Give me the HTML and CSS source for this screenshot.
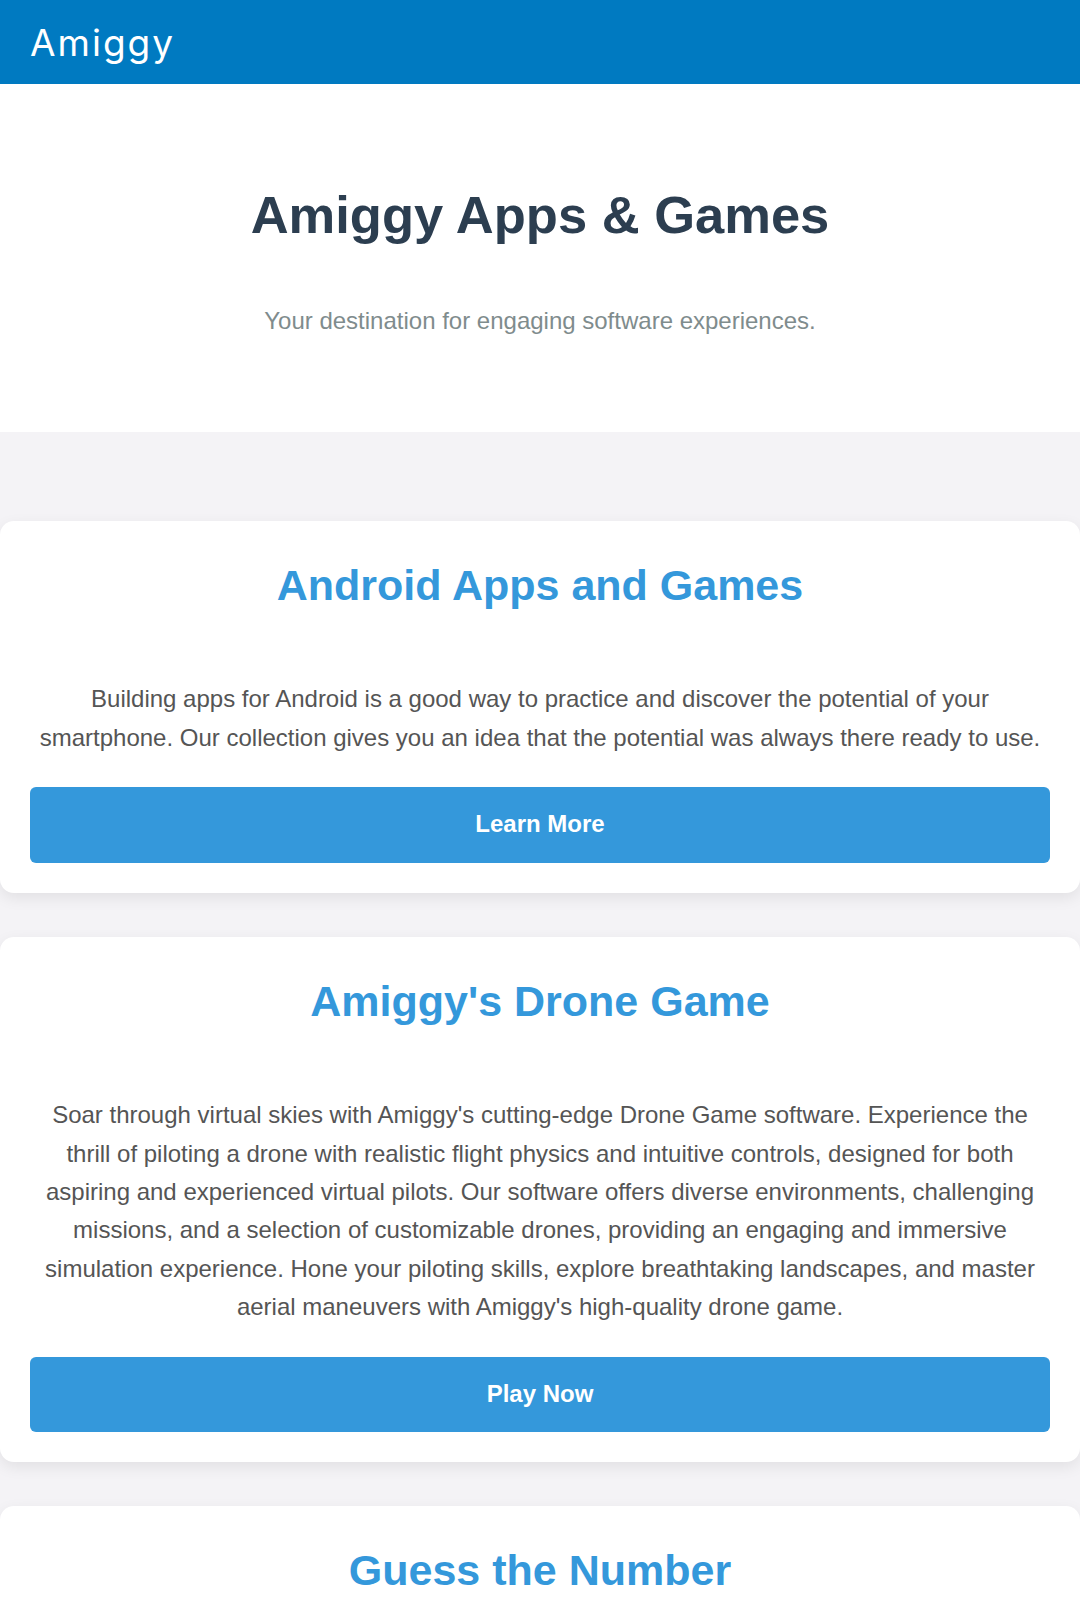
FILE: index.html
```html
<!DOCTYPE html>
<html lang="en">
<head>
    <meta charset="UTF-8">
    <title>Amiggy Apps &amp; Games</title>
    <link rel="stylesheet" href="styles.css">
</head>
<body>
<header class="topbar">
    <a class="logo" href="#">Amiggy</a>
</header>

<section class="hero">
    <h1>Amiggy Apps &amp; Games</h1>
    <p class="tagline">Your destination for engaging software experiences.</p>
</section>

<main class="cards">
    <div class="card">
        <h2>Android Apps and Games</h2>
        <p>Building apps for Android is a good way to practice and discover the potential of your smartphone. Our collection gives you an idea that the potential was always there ready to use.</p>
        <a class="btn" href="#">Learn More</a>
    </div>

    <div class="card">
        <h2>Amiggy's Drone Game</h2>
        <p>Soar through virtual skies with Amiggy's cutting-edge Drone Game software. Experience the thrill of piloting a drone with realistic flight physics and intuitive controls, designed for both aspiring and experienced virtual pilots. Our software offers diverse environments, challenging missions, and a selection of customizable drones, providing an engaging and immersive simulation experience. Hone your piloting skills, explore breathtaking landscapes, and master aerial maneuvers with Amiggy's high-quality drone game.</p>
        <a class="btn" href="#">Play Now</a>
    </div>

    <div class="card">
        <h2>Guess the Number</h2>
        <p>Put your intuition to the test with a classic number guessing game. Pick a range, follow the hints and find the secret number in as few tries as you can.</p>
        <a class="btn" href="#">Play Now</a>
    </div>
</main>
</body>
</html>
```

FILE: styles.css
```css
*{
    margin: 0;
    padding: 0;
    box-sizing: border-box;
}
body{
    font-family: "Liberation Sans", Arial, sans-serif;
    font-size: 24px;
    line-height: 1.6;
    color: #555;
    background-color: #f4f3f6;
}
/* 顶部导航 */
.topbar{
    height: 84px;
    padding: 0 30px;
    display: flex;
    align-items: center;
    background-color: #007ac1;
}
.logo{
    font-family: Inter, "Open Sans", sans-serif;
    font-weight: 400;
    font-size: 37px;
    letter-spacing: 2px;
    line-height: 1;
    color: #fff;
    text-decoration: none;
}
/* 标题区 */
.hero{
    background-color: #fff;
    text-align: center;
    padding: 101px 30px 91px;
}
.hero h1{
    font-size: 52.5px;
    line-height: 1.15;
    color: #2c3e50;
    margin-bottom: 57px;
}
.tagline{
    color: #7f8c8d;
}
/* 卡片列表 */
.cards{
    display: flex;
    flex-direction: column;
    gap: 44px;
    padding: 89px 0 60px;
}
.card{
    background-color: #fff;
    border-radius: 14px;
    box-shadow: 0 5px 15px rgba(0,0,0,.08);
    padding: 40px 30px 30px;
    text-align: center;
}
.card h2{
    font-size: 43px;
    line-height: 1.15;
    color: #3498db;
    margin-bottom: 70px;
}
.card p{
    margin-bottom: 30px;
}
.btn{
    display: block;
    padding: 23px 0 24px;
    border-radius: 6px;
    background-color: #3498db;
    color: #fff;
    font-weight: bold;
    line-height: 1.2;
    text-decoration: none;
}
```
